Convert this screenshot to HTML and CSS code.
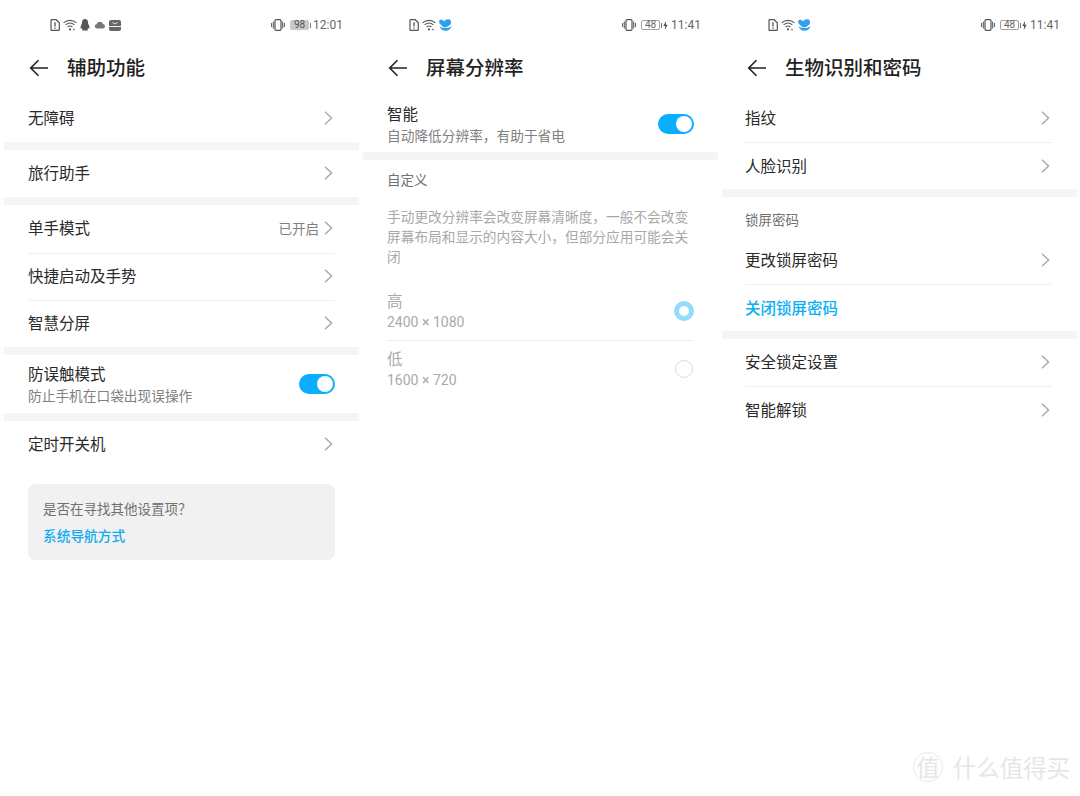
FILE: index.html
```html
<!DOCTYPE html>
<html lang="zh-CN">
<head>
  <meta charset="UTF-8" />
  <title>设置</title>
  <link rel="stylesheet" href="styles.css">
</head>
<body>
  <svg class="sprite" xmlns="http://www.w3.org/2000/svg">
    <symbol id="i-back" viewBox="0 0 20 18"><path d="M19 9H2M9.500 1.200 1.700 9l7.800 7.800" fill="none" stroke="#222" stroke-width="1.600"/></symbol>
    <symbol id="i-chev" viewBox="0 0 9 14"><path d="M1 .8 7.600 7 1 13.200" fill="none" stroke="#a8a8a8" stroke-width="1.400"/></symbol>
    <symbol id="i-sim" viewBox="0 0 10 12"><path d="M1.600.7h4.600l3.100 3v7.100a.6.6 0 0 1-.6.6H1.600a.6.6 0 0 1-.6-.6V1.300a.6.6 0 0 1 .6-.6Z" fill="none" stroke="#555" stroke-width="1.200"/><path d="M5 3.200v4.200M5 8.400v1.400" stroke="#555" stroke-width="1.300"/></symbol>
    <symbol id="i-wifi" viewBox="0 0 14 12"><g fill="none" stroke="#555" stroke-width="1.100"><path d="M.6 3.800C4.200.5 9.800.5 13.400 3.800"/><path d="M2.600 5.900c2.600-2.200 6.200-2.200 8.800 0"/><path d="M4.600 8c1.400-1.100 3.400-1.100 4.800 0"/></g><circle cx="7" cy="10.400" r="1.100" fill="#555"/><circle cx="11" cy="10.600" r=".8" fill="#555"/></symbol>
    <symbol id="i-qq" viewBox="0 0 10 12"><path d="M5 0c2 0 3 1.500 3 3.500 0 1 .4 1.500 1 3 .6 1.600.7 3 .2 3.200L8.300 9c-.2.800-.6 1.400-1 1.700.5.200.9.500.7.900H2c-.2-.4.200-.7.700-.9-.4-.3-.8-.9-1-1.700l-.9.700c-.5-.2-.4-1.600.2-3.200.6-1.500 1-2 1-3C2 1.500 3 0 5 0Z" fill="#555"/></symbol>
    <symbol id="i-cloud" viewBox="0 0 12 8"><path d="M3 7.600A2.400 2.400 0 0 1 2.600 2.900 3.400 3.400 0 0 1 9 2.900a2.400 2.400 0 0 1 .2 4.700Z" fill="#777"/></symbol>
    <symbol id="i-box" viewBox="0 0 12 11"><rect width="12" height="11" rx="2" fill="#666"/><path d="M3.500 2.400 6 4l2.500-1.600M0 6.500h12" fill="none" stroke="#fff" stroke-width=".9"/></symbol>
    <symbol id="i-bird" viewBox="0 0 13 12"><path d="M.5 1.200C2 .4 4 .8 5.200 2.400 6.300.4 9-.4 10.600.6c1.800 1.100 2 3.400.6 5.200l-3.600 2.400H4.400L1.900 5.800C.2 4.500-.3 2.500.5 1.200Z" fill="#2f9fee"/><path d="M.6 7.300c1.400 1.200 3 1.800 5.900 1.800 2.700 0 4.500-.7 6-1.800-.5 2.600-3 4.500-6 4.500S1.100 9.900.6 7.300Z" fill="#2f9fee"/></symbol>
    <symbol id="i-vib" viewBox="0 0 14 12"><rect x="4" y=".7" width="6" height="10.600" rx="1" fill="none" stroke="#555" stroke-width="1.200"/><path d="M2.300 2.500v7M.6 4v4M11.700 2.500v7M13.400 4v4" stroke="#555" stroke-width="1"/></symbol>
    <symbol id="i-bolt" viewBox="0 0 5 9"><path d="M3 0 .3 5h1.800L1.800 9l2.900-5.200H2.800Z" fill="#555"/></symbol>
  </svg>

  <div class="screens">
    <!-- 辅助功能 -->
    <section class="panel">
      <div class="status first-status">
        <div class="status-icons">
          <svg class="ic-sim"><use href="#i-sim"/></svg>
          <svg class="ic-wifi"><use href="#i-wifi"/></svg>
          <svg class="ic-qq"><use href="#i-qq"/></svg>
          <svg class="ic-cloud"><use href="#i-cloud"/></svg>
          <svg class="ic-box"><use href="#i-box"/></svg>
        </div>
        <div class="status-right">
          <svg class="ic-vib"><use href="#i-vib"/></svg>
          <span class="battery full">98</span>
          <span class="time">12:01</span>
        </div>
      </div>
      <div class="topbar">
        <svg class="ic-back"><use href="#i-back"/></svg>
        <h1 class="title">辅助功能</h1>
      </div>
      <div class="row"><span class="label">无障碍</span><svg class="ic-chev"><use href="#i-chev"/></svg></div>
      <div class="gap"></div>
      <div class="row"><span class="label">旅行助手</span><svg class="ic-chev"><use href="#i-chev"/></svg></div>
      <div class="gap"></div>
      <div class="row grow"><span class="label">单手模式</span><span class="row-end"><span class="value">已开启</span><svg class="ic-chev"><use href="#i-chev"/></svg></span></div>
      <div class="row line"><span class="label">快捷启动及手势</span><svg class="ic-chev"><use href="#i-chev"/></svg></div>
      <div class="row line"><span class="label">智慧分屏</span><svg class="ic-chev"><use href="#i-chev"/></svg></div>
      <div class="gap"></div>
      <div class="row tall">
        <div class="two-line"><div class="label">防误触模式</div><div class="sub">防止手机在口袋出现误操作</div></div>
        <span class="toggle"></span>
      </div>
      <div class="gap"></div>
      <div class="row"><span class="label">定时开关机</span><svg class="ic-chev"><use href="#i-chev"/></svg></div>
      <div class="card">
        <div class="card-q">是否在寻找其他设置项？</div>
        <div class="card-link">系统导航方式</div>
      </div>
    </section>

    <!-- 屏幕分辨率 -->
    <section class="panel">
      <div class="status">
        <div class="status-icons">
          <svg class="ic-sim"><use href="#i-sim"/></svg>
          <svg class="ic-wifi"><use href="#i-wifi"/></svg>
          <svg class="ic-bird"><use href="#i-bird"/></svg>
        </div>
        <div class="status-right">
          <svg class="ic-vib"><use href="#i-vib"/></svg>
          <span class="battery">48</span>
          <svg class="ic-bolt"><use href="#i-bolt"/></svg>
          <span class="time">11:41</span>
        </div>
      </div>
      <div class="topbar">
        <svg class="ic-back"><use href="#i-back"/></svg>
        <h1 class="title">屏幕分辨率</h1>
      </div>
      <div class="row smart">
        <div class="two-line"><div class="label">智能</div><div class="sub">自动降低分辨率，有助于省电</div></div>
        <span class="toggle"></span>
      </div>
      <div class="gap"></div>
      <div class="section-head custom">自定义</div>
      <p class="desc">手动更改分辨率会改变屏幕清晰度，一般不会改变屏幕布局和显示的内容大小，但部分应用可能会关闭</p>
      <div class="row res">
        <div class="two-line"><div class="label dim">高</div><div class="sub dim">2400 × 1080</div></div>
        <span class="radio on"></span>
      </div>
      <div class="row res line">
        <div class="two-line"><div class="label dim">低</div><div class="sub dim">1600 × 720</div></div>
        <span class="radio"></span>
      </div>
    </section>

    <!-- 生物识别和密码 -->
    <section class="panel nudged">
      <div class="status">
        <div class="status-icons">
          <svg class="ic-sim"><use href="#i-sim"/></svg>
          <svg class="ic-wifi"><use href="#i-wifi"/></svg>
          <svg class="ic-bird"><use href="#i-bird"/></svg>
        </div>
        <div class="status-right">
          <svg class="ic-vib"><use href="#i-vib"/></svg>
          <span class="battery">48</span>
          <svg class="ic-bolt"><use href="#i-bolt"/></svg>
          <span class="time">11:41</span>
        </div>
      </div>
      <div class="topbar">
        <svg class="ic-back"><use href="#i-back"/></svg>
        <h1 class="title">生物识别和密码</h1>
      </div>
      <div class="row"><span class="label">指纹</span><svg class="ic-chev"><use href="#i-chev"/></svg></div>
      <div class="row line"><span class="label">人脸识别</span><svg class="ic-chev"><use href="#i-chev"/></svg></div>
      <div class="gap"></div>
      <div class="section-head lock">锁屏密码</div>
      <div class="row"><span class="label">更改锁屏密码</span><svg class="ic-chev"><use href="#i-chev"/></svg></div>
      <div class="row line"><span class="label link">关闭锁屏密码</span></div>
      <div class="gap"></div>
      <div class="row"><span class="label">安全锁定设置</span><svg class="ic-chev"><use href="#i-chev"/></svg></div>
      <div class="row line"><span class="label">智能解锁</span><svg class="ic-chev"><use href="#i-chev"/></svg></div>
    </section>
  </div>

  <!-- 水印 -->
  <div class="watermark">
    <span class="wm-badge">值</span>
    <span class="wm-text">什么值得买</span>
  </div>
</body>
</html>
```

FILE: styles.css
```css
html, body {
  margin: 0;
  padding: 0;
  height: 100%;
  background: #fff;
  font-family: "Noto Sans CJK SC", "Noto Sans", sans-serif;
  color: #222;
  overflow: hidden;
}

.sprite {
  display: none;
}

.screens {
  display: flex;
  gap: 4px;
  padding: 0 4px;
}

.panel {
  position: relative;
  flex: 0 0 355px;
}

/* Статус-бар */
.status {
  height: 50px;
  box-sizing: border-box;
  padding: 0 17px 0 46px;
  display: flex;
  align-items: center;
  justify-content: space-between;
}

.status.first-status {
  padding-right: 16px;
}

.status-icons,
.status-right {
  display: flex;
  align-items: center;
}

.status svg {
  display: block;
}

.ic-sim { width: 10px; height: 12px; margin-right: 3px; }
.ic-wifi { width: 14px; height: 12px; margin-right: 3px; }
.ic-qq { width: 10px; height: 12px; margin-right: 4px; }
.ic-cloud { width: 12px; height: 8px; margin-right: 3px; }
.ic-box { width: 12px; height: 11px; }
.ic-bird { width: 13px; height: 12px; }
.ic-vib { width: 14px; height: 12px; margin-right: 5px; }
.ic-bolt { width: 5px; height: 9px; margin-left: 2px; }

.battery {
  position: relative;
  width: 19px;
  height: 10px;
  box-sizing: border-box;
  border: 1px solid #a0a0a0;
  border-radius: 2px;
  margin-right: 1px;
  font: 10px/8px Roboto, sans-serif;
  color: #666;
  text-align: center;
}

.battery::after {
  content: "";
  position: absolute;
  right: -3px;
  top: 1.500px;
  width: 1.500px;
  height: 5px;
  background: #777;
}

.battery.full {
  background: #c8c8c8;
  border-color: #c8c8c8;
  color: #555;
}

.time {
  margin-left: 3px;
  font: 12px/14px Roboto, sans-serif;
  color: #666;
}

/* Шапка */
.topbar {
  height: 35px;
  margin-bottom: 10px;
  display: flex;
  align-items: center;
  padding-left: 25px;
}

.ic-back {
  width: 20px;
  height: 18px;
  margin-right: 18px;
}

.title {
  margin: 0 0 2px;
  font-size: 19.500px;
  font-weight: 500;
  color: #222;
}

/* Строки */
.row {
  height: 47px;
  margin: 0 24px;
  display: flex;
  align-items: center;
  justify-content: space-between;
}

.row.grow {
  height: 47.500px;
}

.row.line {
  box-sizing: border-box;
  border-top: 1px solid #efefef;
}

.row.tall {
  height: 58.500px;
}

.row.smart {
  height: 57px;
}

.row.res {
  height: 58px;
}

.row.res.line {
  height: 57px;
}

.nudged .row,
.nudged .section-head {
  margin: 0 25px 0 23px;
}

.label {
  font-size: 15.500px;
  line-height: 22px;
  color: #2a2a2a;
}

.row > .label {
  margin-bottom: 3px;
}

.label.link {
  color: #0aaef5;
  font-weight: 500;
}

.label.dim {
  color: #aaa;
}

.sub {
  font-size: 13.700px;
  line-height: 22px;
  color: #808080;
}

.sub.dim {
  color: #aaa;
  font-family: Roboto, sans-serif;
  font-size: 14px;
}

.value {
  font-size: 13.500px;
  color: #808080;
  margin-right: 5px;
  margin-bottom: 2px;
}

.row-end {
  display: flex;
  align-items: center;
}

.ic-chev {
  width: 9px;
  height: 14px;
  margin: 0 2px 1px 0;
}

.gap {
  height: 8px;
  background: #f5f5f5;
}

/* Переключатель */
.toggle {
  position: relative;
  width: 36px;
  height: 20px;
  border-radius: 10px;
  background: #0aaeff;
}

.toggle::after {
  content: "";
  position: absolute;
  right: 2px;
  top: 2px;
  width: 16px;
  height: 16px;
  border-radius: 50%;
  background: #fff;
}

/* Разрешение */
.section-head {
  margin: 0 24px;
  font-size: 13.500px;
  line-height: 20px;
  color: #707070;
}

.section-head.custom {
  padding: 9px 0 17px;
}

.section-head.lock {
  padding: 12px 0 8px;
}

.desc {
  margin: 0 24px 16px;
  font-size: 13.700px;
  line-height: 20px;
  color: #a8a8a8;
}

.radio {
  width: 18px;
  height: 18px;
  box-sizing: border-box;
  border: 1px solid #ddd;
  border-radius: 50%;
  margin-right: 1px;
}

.radio.on {
  width: 20px;
  height: 20px;
  border: 5px solid #94dcff;
  margin-right: 0;
}

/* Карточка */
.card {
  margin: 16px 24px 0;
  height: 76px;
  box-sizing: border-box;
  padding: 13px 15px;
  border-radius: 8px;
  background: #f1f1f1;
}

.card-q {
  font-size: 13.500px;
  line-height: 22px;
  color: #707070;
}

.card-link {
  margin-top: 5px;
  font-size: 13.700px;
  line-height: 22px;
  font-weight: 500;
  color: #12abf0;
}

/* Водяной знак поверх скриншота */
.watermark {
  position: absolute;
  right: 10px;
  bottom: 14px;
  display: flex;
  align-items: center;
  color: #e6e6e6;
}

.wm-badge {
  width: 30px;
  height: 30px;
  box-sizing: border-box;
  border: 1px solid #e8e8e8;
  border-radius: 50%;
  margin-right: 10px;
  text-align: center;
  font-size: 23px;
  line-height: 27px;
}

.wm-text {
  font-size: 23.400px;
  line-height: 30px;
}
```
